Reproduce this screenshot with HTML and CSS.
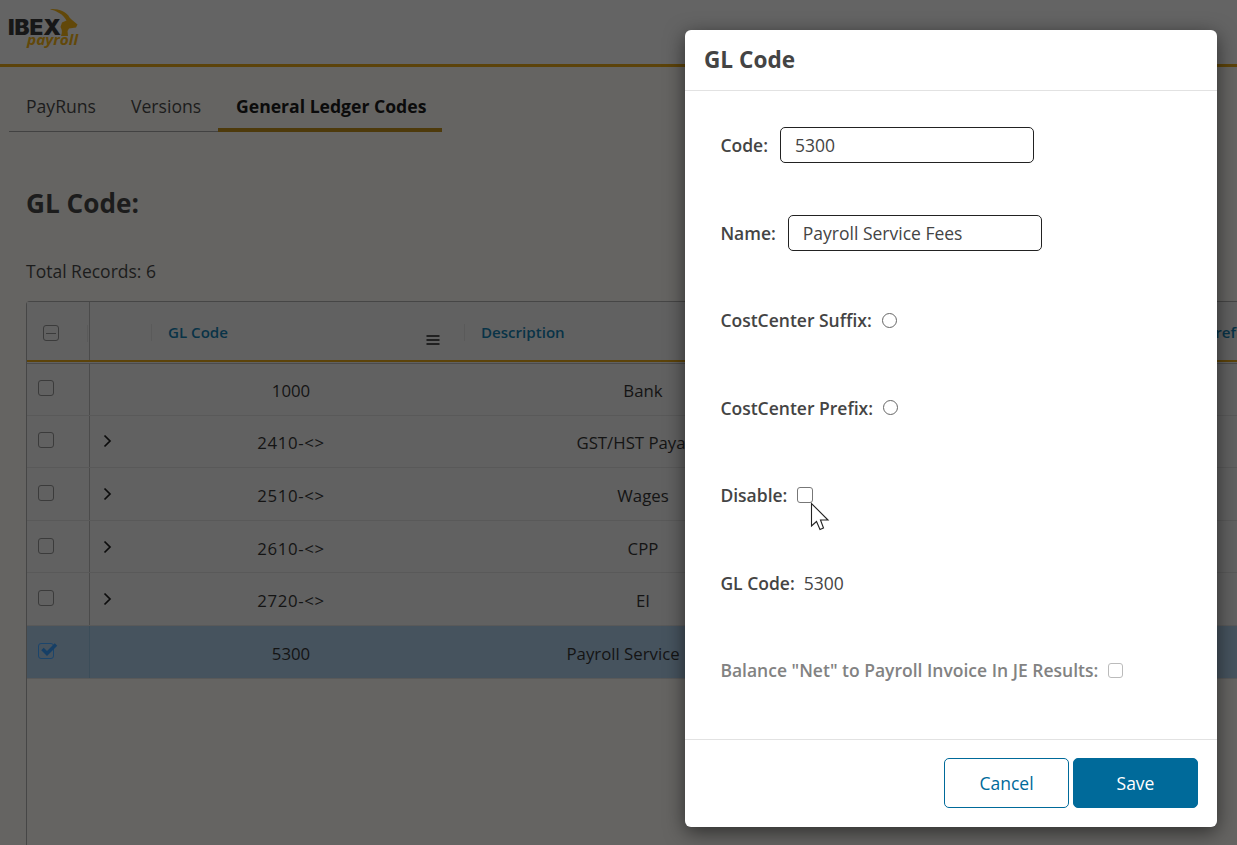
FILE: index.html
```html
<!DOCTYPE html>
<html lang="en">
<head>
<meta charset="utf-8">
<title>GL Code</title>
<link rel="stylesheet" href="styles.css">
</head>
<body>
<div class="app">
  <header class="topbar">
    <svg class="logo" viewBox="0 0 80 50" width="80" height="50">
      <path d="M50 9.200C58 8.500 67 12 69.500 17.500L71.500 19.500 77.500 24.500 76 27.500 69 28.500 67.500 31 68 36H61C62.500 32 62 29.500 60.500 27L62 22.500 66.500 20.500C63 14 57 11 50 9.200Z" fill="#624809"/>
      <text class="logo-name" x="8" y="35" textLength="53" lengthAdjust="spacingAndGlyphs">IBEX</text>
      <text class="logo-sub" x="27" y="45" textLength="51" lengthAdjust="spacingAndGlyphs">payroll</text>
    </svg>
  </header>
  <nav class="tabs">
    <a class="tab tab-payruns">PayRuns</a>
    <a class="tab tab-versions">Versions</a>
    <a class="tab tab-active">General Ledger Codes</a>
  </nav>
  <h1 class="title">GL Code:</h1>
  <p class="total">Total Records: 6</p>
  <div class="grid">
    <div class="head">
      <div class="head-check"><span class="box box-minus"></span><i class="sep"></i></div>
      <div class="head-expand"><i class="sep"></i></div>
      <div class="head-code"><span>GL Code</span>
        <svg class="menu" width="14" height="10" viewBox="0 0 14 10"><path d="M.5 1H13.500M.5 5H13.500M.5 9H13.500" stroke="#0c0c0c" stroke-width="1.300"/></svg><i class="sep"></i>
      </div>
      <div class="head-desc"><span>Description</span></div>
      <div class="head-prefix"><span>Prefix</span></div>
    </div>
    <div class="row"><div class="check"><span class="box"></span></div><div class="expand"></div><div class="code">1000</div><div class="desc">Bank</div></div>
    <div class="row"><div class="check"><span class="box"></span></div><div class="expand"><svg width="9" height="14" viewBox="0 0 9 14"><path d="M1.500 1.500 7 7 1.500 12.500"/></svg></div><div class="code wide">2410-&lt;&gt;</div><div class="desc">GST/HST Payable</div></div>
    <div class="row"><div class="check"><span class="box"></span></div><div class="expand"><svg width="9" height="14" viewBox="0 0 9 14"><path d="M1.500 1.500 7 7 1.500 12.500"/></svg></div><div class="code wide">2510-&lt;&gt;</div><div class="desc">Wages</div></div>
    <div class="row"><div class="check"><span class="box"></span></div><div class="expand"><svg width="9" height="14" viewBox="0 0 9 14"><path d="M1.500 1.500 7 7 1.500 12.500"/></svg></div><div class="code wide">2610-&lt;&gt;</div><div class="desc">CPP</div></div>
    <div class="row"><div class="check"><span class="box"></span></div><div class="expand"><svg width="9" height="14" viewBox="0 0 9 14"><path d="M1.500 1.500 7 7 1.500 12.500"/></svg></div><div class="code wide">2720-&lt;&gt;</div><div class="desc">EI</div></div>
    <div class="row selected"><div class="check"><span class="box box-checked"><svg width="17" height="14" viewBox="0 0 17 14"><path d="M1.500 6 6 10.500 15 1.500" fill="none" stroke="#163f66" stroke-width="3.500"/></svg></span></div><div class="expand"></div><div class="code">5300</div><div class="desc">Payroll Service Fees</div></div>
  </div>
</div>

<section class="modal">
  <h2 class="modal-title">GL Code</h2>
  <div class="fields">
    <label class="field"><span class="label">Code:</span><span class="input">5300</span></label>
    <label class="field"><span class="label">Name:</span><span class="input">Payroll Service Fees</span></label>
    <label class="field"><span class="label">CostCenter Suffix:</span><span class="radio"></span></label>
    <label class="field"><span class="label">CostCenter Prefix:</span><span class="radio"></span></label>
    <label class="field"><span class="label">Disable:</span><span class="option"></span></label>
    <label class="field"><span class="label">GL Code:</span><span class="value">5300</span></label>
    <label class="field muted"><span class="label">Balance "Net" to Payroll Invoice In JE Results:</span><span class="option"></span></label>
  </div>
  <footer class="actions"><button class="btn">Cancel</button><button class="btn primary">Save</button></footer>
</section>

<svg class="cursor" width="20" height="29" viewBox="0 0 20 29"><path d="M1.500 1.500V24L6.500 19.500 10 27.500 13.500 26 10.500 18H18Z" fill="#fff" stroke="#222" stroke-width="1.100"/></svg>
</body>
</html>
```

FILE: styles.css
```css
* { box-sizing: border-box; }
body { margin: 0; width: 1237px; height: 845px; overflow: hidden; background: #656462; font-family: "Open Sans", "Noto Sans", sans-serif; color: #1c1c1c; }
.app { width: 1237px; height: 845px; overflow: hidden; display: flex; flex-direction: column; }
.topbar { height: 67px; flex: none; background: #646464; border-bottom: 3px solid #5c430a; }
.logo { display: block; }
.logo-name { font: 900 21px Inter, sans-serif; fill: #171717; }
.logo-sub { font: italic 700 15px "Open Sans", sans-serif; fill: #624809; }
.tabs { display: flex; flex: none; height: 65px; margin-left: 9px; }
.tab { height: 65px; padding: 25px 0 0 17px; font-size: 17.600px; line-height: 28px; white-space: nowrap; border-bottom: 1px solid #424242; }
.tab-payruns { width: 105px; }
.tab-versions { width: 104px; }
.tab-active { width: 224px; padding-left: 18px; font-weight: 700; color: #0b0b0b; border-bottom: 4px solid #4e3a0b; }
.title { margin: 52px 0 0 26px; font-size: 26.200px; line-height: 38px; font-weight: 700; }
.total { margin: 35px 0 0 26px; font-size: 17.5px; line-height: 28px; }
.grid { flex: 1; margin: 16px 0 0 26px; width: 1250px; border: 1px solid #464646; border-right: 0; border-bottom: 0; border-radius: 4px 0 0 0; font-size: 16.800px; color: #141414; }
.head { display: flex; height: 60px; margin-bottom: 1px; background: #616161; border-bottom: 2px solid #5c430a; box-shadow: 0 1px 0 #616161, 0 2px 0 #4b4b4b; font-size: 15.100px; font-weight: 600; color: #093347; position: relative; }
.head > div { display: flex; align-items: center; flex: none; padding-top: 2px; }
.head > .head-check { width: 63px; padding: 4px 0 0 16px; border-right: 1px solid #4b4b4b; }
.head-check .sep { margin-left: 28px; }
.head-expand { width: 62px; justify-content: flex-end; }
.head-code { width: 313px; padding-left: 16px; justify-content: space-between; }
.head-code .menu { margin: 16px 24px 0 auto; }
.head-desc { width: 660px; padding-left: 16px; }
.head-prefix { padding-left: 81px; }
.sep { width: 1px; height: 17px; background: #5a5a5a; }
.row { display: flex; height: 52.600px; background: #616161; border-bottom: 1px solid #595959; }
.row > div { flex: none; display: flex; align-items: center; white-space: nowrap; }
.row > .check { width: 63px; padding: 0 0 2px 11px; border-right: 1px solid #4b4b4b; }
.box { position: relative; width: 16px; height: 16px; border: 1.500px solid #3b3b3b; border-radius: 3px; }
.box-minus { display: flex; align-items: center; justify-content: center; }
.box-minus::after { content: ""; width: 10px; height: 1px; background: #3b3b3b; }
.row > .expand { width: 62px; padding: 0 0 0 13px; }
.expand path { fill: none; stroke: #0c0c0c; stroke-width: 1.700; }
.row > .code { width: 278px; justify-content: center; padding-top: 3px; }
.row > .desc { width: 426px; justify-content: center; padding-top: 3px; }
.row > .wide { letter-spacing: .65px; }
.selected { background: #46535e; }
.selected > .check { border-right-color: #3c4d59; }
.box-checked { border-color: #1b456c; }
.box-checked svg { position: absolute; left: 2px; top: -1px; }

.modal { position: absolute; left: 685px; top: 30px; width: 532px; height: 797px; display: flex; flex-direction: column; background: #fff; border-radius: 6px; box-shadow: 0 5px 20px rgba(0,0,0,.55); color: #444; }
.modal-title { margin: 0; height: 61px; padding: 0 19px; border-bottom: 1px solid #e2e2e2; font-size: 22.600px; line-height: 59px; font-weight: 700; }
.fields { flex: 1; padding: 10.400px 35.400px 0; font-size: 17.500px; }
.field { display: flex; align-items: center; height: 87.500px; white-space: nowrap; }
.label { font-weight: 600; }
.input { width: 254px; height: 36px; border: 1px solid #222; border-radius: 5px; padding: 0 14px; line-height: 35px; margin-left: 12px; }
.radio { width: 15px; height: 15px; border: 1px solid #666; border-radius: 50%; margin-left: 10px; }
.option { width: 16px; height: 16px; border: 1px solid #777; border-radius: 3px; margin-left: 10px; }
.value { margin-left: 9px; }
.muted { color: #828282; }
.muted .option { width: 15px; height: 15px; border-color: #bbb; }
.actions { height: 88px; border-top: 1px solid #e2e2e2; padding: 18px 19px 0; display: flex; justify-content: flex-end; gap: 4px; }
.btn { width: 125px; height: 50px; border: 1px solid #006a9a; border-radius: 5px; background: #fff; color: #006a9a; font: 17.500px "Open Sans", sans-serif; padding: 0; }
.primary { background: #006a9a; color: #fff; font-weight: 500; }
.cursor { position: absolute; left: 810px; top: 502px; }
```
